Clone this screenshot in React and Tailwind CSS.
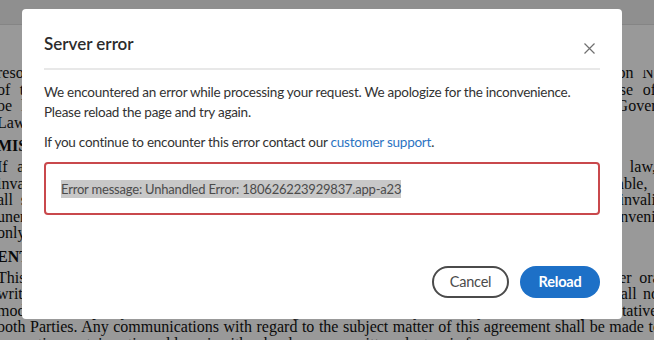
import React from "react";

const LINES = [
  { t: "resolution of such dispute shall be referred to and resolved in accordance with Arbitration Notice" },
  { t: "of the Parties, either Party may refer the matter to a mediator of mutual choice in case of the" },
  { t: "be lawfully held in the jurisdiction named and this agreement shall be read under the Governing" },
  { t: "Laws of the State.", last: true },
  { t: "MISCELLANEOUS", head: true },
  { t: "If any provision of this agreement is held by a court of jurisdiction to be contrary to law, the" },
  { t: "invalid or void, the remaining provisions shall remain in force and be deemed unenforceable, such" },
  { t: "all such provisions shall be limited or eliminated to the minimum extent so as not to be invalid or" },
  { t: "unenforceable, and the Parties shall cooperate to resolve any resulting delay or inconvenience" },
  { t: "only.", last: true },
  { t: "ENTIRE AGREEMENT", head: true },
  { t: "This agreement constitutes the entire agreement between the Parties and supersedes all other oral or" },
  { t: "written understandings relating to its subject matter. This agreement may be amended and shall not be" },
  { t: "modified except by a written instrument signed and dated by the duly authorised representatives of" },
  { t: "both Parties. Any communications with regard to the subject matter of this agreement shall be made to the" },
  { t: "respective party's notice address in either hard copy or written electronic form.", last: true },
];

const Document = () => {
  return (
    <div className="flex flex-col h-full bg-white">
      {/* toolbar */}
      <div className="h-[25px] bg-[#eeeeee] border-b border-[#dedede]" />
      <div className="h-[45px]" />
      {/* page text */}
      <div className="flex-1 overflow-hidden">
        <div className="-mt-[5px] -ml-[3px] w-[688px] font-['Liberation_Serif',serif] text-[16px] leading-[16.6px] text-[#111]">
          {LINES.map((line, i) =>
            line.head ? (
              <div key={i} className="mt-[7px] mb-[4px] font-bold whitespace-nowrap">
                {line.t}
              </div>
            ) : (
              <div
                key={i}
                className={line.last ? "whitespace-nowrap" : "text-justify [text-align-last:justify]"}
              >
                {line.t}
              </div>
            )
          )}
        </div>
      </div>
    </div>
  );
};

const CloseIcon = () => (
  <svg width="11" height="11" viewBox="0 0 11 11" fill="none" stroke="currentColor" strokeWidth="1.2">
    <path d="M0.5 0.5 L10.5 10.5 M10.5 0.5 L0.5 10.5" />
  </svg>
);

const ErrorDialog = () => {
  return (
    <div className="absolute left-[22px] top-[9px] w-[600px] h-[310px] rounded-[4px] bg-white px-[22px] pt-[23px] font-[Lato,sans-serif] text-[#323232]">
      {/* header */}
      <div className="flex items-start justify-between h-[24px]">
        <h2 className="text-[17px] leading-[24px] font-semibold text-[#2c2c2c]">Server error</h2>
        <button className="mt-[11px] mr-[5px] text-[#707070]">
          <CloseIcon />
        </button>
      </div>
      <div className="mt-[12px] h-[2px] bg-[#e8e8e8]" />

      {/* body */}
      <p className="mt-[12px] text-[13.5px] leading-[20px] tracking-[-0.25px]">
        We encountered an error while processing your request. We apologize for the inconvenience.
        <br />
        Please reload the page and try again.
      </p>
      <p className="mt-[10px] text-[13.5px] leading-[20px] tracking-[-0.25px]">
        If you continue to encounter this error contact our{" "}
        <a className="text-[#2b74c2] cursor-pointer">customer support</a>.
      </p>
      <div className="mt-[10px] h-[53px] flex items-center px-[15px] border-2 border-[#c9484c] rounded-[4px]">
        <span className="bg-[#c8c8c8] text-[13px] leading-[18px] tracking-[-0.2px] text-[#4b4b4b]">
          Error message: Unhandled Error: 180626223929837.app-a23
        </span>
      </div>

      {/* actions */}
      <div className="mt-[51px] flex justify-end gap-[11px]">
        <button className="h-[32px] w-[77px] rounded-full border-2 border-[#4b4b4b] text-[14.5px] tracking-[-0.2px] text-[#4b4b4b]">
          Cancel
        </button>
        <button className="h-[32px] w-[80px] rounded-full bg-[#1d70c7] text-[14.5px] tracking-[-0.2px] font-bold text-white">
          Reload
        </button>
      </div>
    </div>
  );
};

const App = () => {
  return (
    <div className="relative w-[654px] h-[340px] overflow-hidden">
      <Document />
      {/* dim overlay */}
      <div className="absolute inset-0 bg-black/40" />
      <ErrorDialog />
    </div>
  );
};

export default App;
